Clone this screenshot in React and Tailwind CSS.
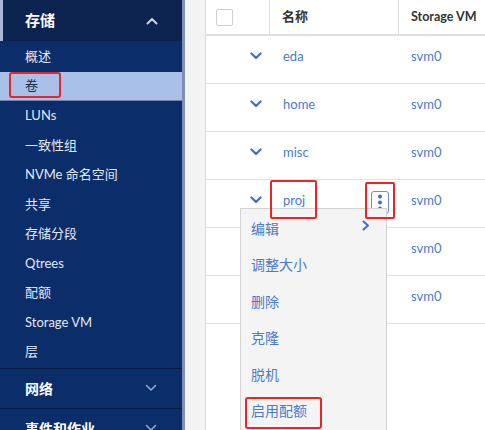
import React from "react";

const font = { fontFamily: "Lato, 'Noto Sans CJK SC', sans-serif" };

function ChevronUp({ className }) {
  return (
    <svg className={className} width="12" height="8" viewBox="0 0 12 8" fill="none">
      <path d="M1.5 6.5 L6 2 L10.5 6.5" stroke="currentColor" strokeWidth="2" strokeLinecap="round" strokeLinejoin="round" />
    </svg>
  );
}
function ChevronDown({ className, w = 12, sw = 1.6 }) {
  return (
    <svg className={className} width={w} height="8" viewBox="0 0 12 8" fill="none">
      <path d="M1.5 1.5 L6 6 L10.5 1.5" stroke="currentColor" strokeWidth={sw} strokeLinecap="round" strokeLinejoin="round" />
    </svg>
  );
}

const navItems = ["概述", "卷", "LUNs", "一致性组", "NVMe 命名空间", "共享", "存储分段", "Qtrees", "配额", "Storage VM", "层"];

const rows = [
  { name: "eda" },
  { name: "home" },
  { name: "misc" },
  { name: "proj", menu: true },
  { name: "" },
  { name: "" },
];

export default function App() {
  return (
    <div className="relative w-[485px] h-[430px] overflow-hidden flex bg-white" style={font}>
      {/* Sidebar */}
      <div className="w-[185px] shrink-0 bg-[#0b2d69] border-r-[3px] border-[#7f8fb0] flex flex-col">
        <div className="h-[41px] shrink-0 bg-[#0c2350] border-l-[3px] border-[#a9b8d6] flex items-center justify-between pl-[22px] pr-[24px]">
          <span className="text-white font-bold text-[15px]">存储</span>
          <ChevronUp className="text-[#c9d3e8]" />
        </div>
        <div className="flex flex-col pt-[1px]">
          {navItems.map((t) => (
            <div
              key={t}
              className={
                "h-[29.5px] flex items-center pl-[25px] text-[13px] " +
                (t === "卷" ? "bg-[#a9c1e8] text-[#1d2b4a] border-b border-[#6f86b3]" : "text-[#e3e8f2]")
              }
            >
              {t}
            </div>
          ))}
        </div>
        <div className="mt-[1px] border-t border-[#061a42] h-[40px] shrink-0 flex items-center justify-between pl-[25px] pr-[25px]">
          <span className="text-white font-bold text-[14px]">网络</span>
          <ChevronDown className="text-[#8fa6d6]" />
        </div>
        <div className="border-t border-[#061a42] h-[40px] shrink-0 flex items-center justify-between pl-[25px] pr-[25px]">
          <span className="text-white font-bold text-[14px]">事件和作业</span>
          <ChevronDown className="text-[#8fa6d6]" />
        </div>
      </div>

      {/* gray gutter */}
      <div className="w-[21px] shrink-0 bg-[#f3f3f3] border-r border-[#dcdcdc]" />

      {/* table */}
      <div className="flex-1 flex flex-col">
        <div className="h-[36px] shrink-0 flex border-b-2 border-[#dedede]">
          <div className="w-[64px] border-r border-[#dedede] flex items-center pl-[10px]">
            <div className="w-[17px] h-[17px] rounded-[2px] border border-[#cfcfcf] bg-white" />
          </div>
          <div className="w-[129px] border-r border-[#dedede] flex items-center pl-[12px] text-[13px] font-bold text-[#333]">
            名称
          </div>
          <div className="flex-1 flex items-center pl-[12px] text-[12.5px] font-bold text-[#333] whitespace-nowrap">
            Storage VM
          </div>
        </div>
        {rows.map((r, i) => (
          <div key={i} className="h-[48px] shrink-0 flex border-b border-[#e2e2e2]">
            <div className="w-[64px] flex justify-end pr-[8px] pt-[16px]">
              {r.name && <ChevronDown className="text-[#3f6fc4]" sw={2.2} />}
            </div>
            <div className="w-[129px] flex justify-between pl-[13px] pr-[10px] pt-[11px]">
              <span className="text-[13px] text-[#4a7bc8]">{r.name}</span>
              {r.menu && (
                <div className="w-[18px] h-[23px] rounded-[3px] border border-[#6b90cf] bg-white flex items-center justify-center">
                  <svg width="6" height="17" viewBox="0 0 6 17">
                    <circle cx="3" cy="2.5" r="2" fill="#3f6fc4" />
                    <circle cx="3" cy="8.5" r="2" fill="#3f6fc4" />
                    <circle cx="3" cy="14.5" r="2" fill="#3f6fc4" />
                  </svg>
                </div>
              )}
            </div>
            <div className="flex-1 pl-[12px] pt-[11px] text-[13px] text-[#4a7bc8]">svm0</div>
          </div>
        ))}
      </div>

      {/* Context menu */}
      <div className="absolute left-[240px] top-[208px] w-[147px] h-[240px] bg-[#f4f4f4] border border-[#d3d3d3] pt-[1px]">
        {["编辑", "调整大小", "删除", "克隆", "脱机", "启用配额"].map((t, i) => (
          <div key={t} className="h-[36.5px] flex items-center justify-between pl-[10px] pr-[16px] text-[14px] text-[#4a7bc8]">
            <span>{t}</span>
            {i === 0 && (
              <svg width="8" height="11" viewBox="0 0 8 11" fill="none" className="-mt-[6px]">
                <path d="M1.5 1.5 L6 5.5 L1.5 9.5" stroke="#3f6fc4" strokeWidth="2" strokeLinecap="round" strokeLinejoin="round" />
              </svg>
            )}
          </div>
        ))}
      </div>

      {/* Red annotation boxes */}
      <div className="absolute left-[9px] top-[72px] w-[52px] h-[26px] rounded-[3px] border-2 border-[#e8262a]" />
      <div className="absolute left-[270px] top-[180px] w-[47px] h-[39px] rounded-[2px] border-2 border-[#e8262a]" />
      <div className="absolute left-[365px] top-[182px] w-[30px] h-[37px] rounded-[2px] border-2 border-[#e8262a]" />
      <div className="absolute left-[245px] top-[397px] w-[77px] h-[32px] rounded-[3px] border-2 border-[#e8262a]" />
    </div>
  );
}
